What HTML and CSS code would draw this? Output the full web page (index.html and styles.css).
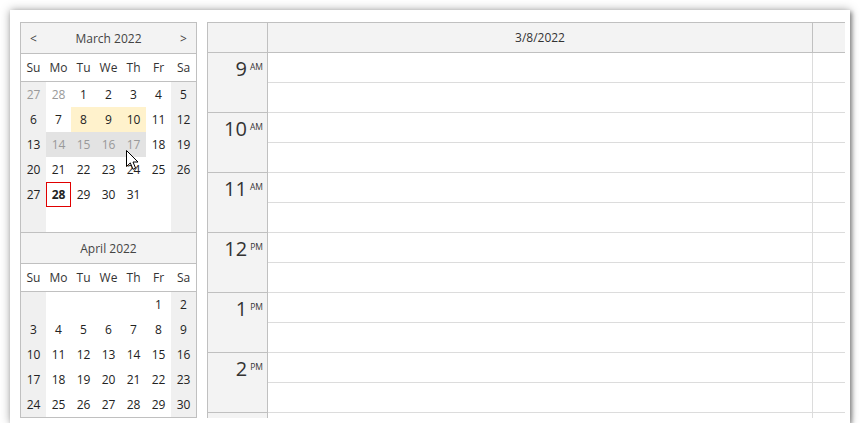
FILE: index.html
```html
<!DOCTYPE html>
<html>
<head>
<meta charset="utf-8">
<link rel="stylesheet" href="styles.css">
</head>
<body>
<div class="frame">
  <div class="nav">
    <div class="month">
      <div class="grid7 m-head"><span class="arrow">&lt;</span><span class="title">March 2022</span><span class="arrow">&gt;</span></div>
      <div class="grid7 dow"><span>Su</span><span>Mo</span><span>Tu</span><span>We</span><span>Th</span><span>Fr</span><span>Sa</span></div>
      <div class="grid7 days">
        <span class="d we om">27</span><span class="d om">28</span><span class="d">1</span><span class="d">2</span><span class="d">3</span><span class="d">4</span><span class="d we">5</span>
        <span class="d we">6</span><span class="d">7</span><span class="d hl">8</span><span class="d hl">9</span><span class="d hl">10</span><span class="d">11</span><span class="d we">12</span>
        <span class="d we">13</span><span class="d sel">14</span><span class="d sel">15</span><span class="d sel">16</span><span class="d sel">17</span><span class="d">18</span><span class="d we">19</span>
        <span class="d we">20</span><span class="d">21</span><span class="d">22</span><span class="d">23</span><span class="d">24</span><span class="d">25</span><span class="d we">26</span>
        <span class="d we">27</span><span class="d today">28</span><span class="d">29</span><span class="d">30</span><span class="d">31</span><span class="d"></span><span class="d we"></span>
        <span class="d we"></span><span class="d"></span><span class="d"></span><span class="d"></span><span class="d"></span><span class="d"></span><span class="d we"></span>
      </div>
    </div>
    <div class="month">
      <div class="grid7 m-head"><span class="title">April 2022</span></div>
      <div class="grid7 dow"><span>Su</span><span>Mo</span><span>Tu</span><span>We</span><span>Th</span><span>Fr</span><span>Sa</span></div>
      <div class="grid7 days">
        <span class="d we"></span><span class="d"></span><span class="d"></span><span class="d"></span><span class="d"></span><span class="d">1</span><span class="d we">2</span>
        <span class="d we">3</span><span class="d">4</span><span class="d">5</span><span class="d">6</span><span class="d">7</span><span class="d">8</span><span class="d we">9</span>
        <span class="d we">10</span><span class="d">11</span><span class="d">12</span><span class="d">13</span><span class="d">14</span><span class="d">15</span><span class="d we">16</span>
        <span class="d we">17</span><span class="d">18</span><span class="d">19</span><span class="d">20</span><span class="d">21</span><span class="d">22</span><span class="d we">23</span>
        <span class="d we">24</span><span class="d">25</span><span class="d">26</span><span class="d">27</span><span class="d">28</span><span class="d">29</span><span class="d we">30</span>
      </div>
    </div>
  </div>
  <div class="sched">
    <div class="s-head">
      <div class="corner"></div>
      <div class="colhead">3/8/2022</div>
      <div class="sb"></div>
    </div>
    <div class="s-body">
      <div class="times">
        <div class="hour"><span class="hnum">9</span><span class="ampm">AM</span></div>
        <div class="hour"><span class="hnum">10</span><span class="ampm">AM</span></div>
        <div class="hour"><span class="hnum">11</span><span class="ampm">AM</span></div>
        <div class="hour"><span class="hnum">12</span><span class="ampm">PM</span></div>
        <div class="hour"><span class="hnum">1</span><span class="ampm">PM</span></div>
        <div class="hour"><span class="hnum">2</span><span class="ampm">PM</span></div>
        <div class="hour"></div>
      </div>
      <div class="col">
        <div class="half"></div><div class="half"></div><div class="half"></div><div class="half"></div>
        <div class="half"></div><div class="half"></div><div class="half"></div><div class="half"></div>
        <div class="half"></div><div class="half"></div><div class="half"></div><div class="half"></div>
        <div class="half"></div><div class="half"></div>
      </div>
      <div class="sbcol">
        <div class="half"></div><div class="half"></div><div class="half"></div><div class="half"></div>
        <div class="half"></div><div class="half"></div><div class="half"></div><div class="half"></div>
        <div class="half"></div><div class="half"></div><div class="half"></div><div class="half"></div>
        <div class="half"></div><div class="half"></div>
      </div>
    </div>
  </div>
  <svg class="cursor" width="14" height="22" viewBox="0 0 14 22">
    <path d="M0.5 0.5 L0.5 16.5 L4.3 12.9 L7 19.3 L9.6 18.2 L7 12 L12 12 Z" fill="#fff" stroke="#000" stroke-width="1" stroke-linejoin="miter"/>
  </svg>
</div>
</body>
</html>
```

FILE: styles.css
```css
html, body {
  margin: 0;
  padding: 0;
  background: #fff;
}

body {
  font-family: "Open Sans", "Noto Sans", sans-serif;
  font-size: 12px;
  color: #333;
}

.frame {
  position: relative;
  margin: 10px 0 0 10px;
  width: 840px;
  height: 413px;
  box-sizing: border-box;
  padding: 12px 5px 5px 10px;
  background: #fff;
  display: flex;
  gap: 10px;
  box-shadow: 0 0 9px rgba(0, 0, 0, 0.35), 2px 2px 4px rgba(0, 0, 0, 0.35);
}

/* Navigator */
.nav {
  width: 177px;
  flex: none;
  box-sizing: border-box;
  border: 1px solid #c0c0c0;
  border-bottom: none;
  overflow: hidden;
}

.grid7 {
  display: grid;
  grid-template-columns: repeat(7, 25px);
}

.m-head {
  height: 31px;
  box-sizing: border-box;
  background: #f3f3f3;
  border-bottom: 1px solid #c0c0c0;
  align-items: center;
  color: #444;
}

.m-head .title {
  grid-column: 2 / 7;
  text-align: center;
}

.m-head .arrow {
  text-align: center;
}

.dow {
  height: 28px;
  box-sizing: border-box;
  border-bottom: 1px solid #c0c0c0;
  align-items: center;
  background: #fff;
}

.dow span {
  text-align: center;
}

.days {
  grid-auto-rows: 25px;
  border-bottom: 1px solid #c0c0c0;
}

.d {
  display: flex;
  align-items: center;
  justify-content: center;
  color: #222;
  box-sizing: border-box;
}

.d.we { background: #f0f0f0; }
.d.om { color: #999; }
.d.hl { background: #fff2cc; }
.d.sel { background: #e3e3e3; color: #999; }
.d.today {
  font-weight: bold;
  border: 1px solid #e00000;
}

/* Scheduler */
.sched {
  flex: 1;
  box-sizing: border-box;
  border-top: 1px solid #c0c0c0;
  border-left: 1px solid #c0c0c0;
  overflow: hidden;
  display: flex;
  flex-direction: column;
}

.s-head {
  display: flex;
  height: 30px;
  flex: none;
  box-sizing: border-box;
  background: #f3f3f3;
  border-bottom: 1px solid #c0c0c0;
}

.corner {
  width: 60px;
  box-sizing: border-box;
  border-right: 1px solid #c0c0c0;
}

.colhead {
  width: 545px;
  box-sizing: border-box;
  border-right: 1px solid #c0c0c0;
  display: flex;
  align-items: center;
  justify-content: center;
  color: #333;
}

.sb { flex: 1; }

.s-body {
  display: flex;
  flex: 1;
}

.times {
  width: 60px;
  flex: none;
  box-sizing: border-box;
  background: #f3f3f3;
  border-right: 1px solid #c0c0c0;
}

.hour {
  height: 60px;
  box-sizing: border-box;
  border-bottom: 1px solid #c0c0c0;
  display: flex;
  justify-content: flex-end;
  align-items: flex-start;
  padding: 4px 4px 0 0;
  color: #333;
}

.hnum {
  font-size: 20px;
  line-height: 24px;
}

.ampm {
  font-size: 8.5px;
  line-height: 10px;
  margin: 5px 0 0 3px;
}

.col {
  width: 545px;
  flex: none;
  box-sizing: border-box;
  border-right: 1px solid #dcdcdc;
}

.sbcol { flex: 1; }

.half {
  height: 30px;
  box-sizing: border-box;
  border-bottom: 1px solid #dcdcdc;
}

.cursor {
  position: absolute;
  left: 116px;
  top: 140px;
}
```
